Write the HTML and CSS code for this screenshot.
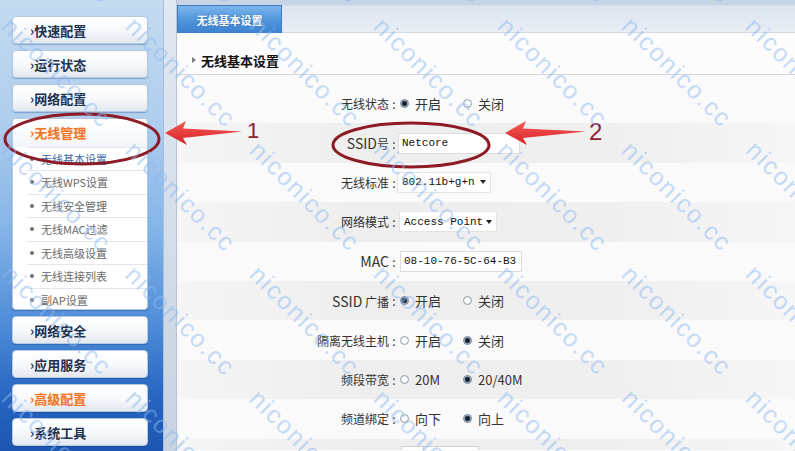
FILE: index.html
```html
<!DOCTYPE html>
<html lang="zh-CN">
<head>
<meta charset="utf-8">
<title>无线基本设置</title>
<link rel="stylesheet" href="styles.css">
</head>
<body>
<div class="app">
  <aside class="sidebar">
    <nav class="menu">
      <div class="btn">›快速配置</div>
      <div class="btn">›运行状态</div>
      <div class="btn">›网络配置</div>
      <div class="group">
        <div class="btn head orange">›无线管理</div>
        <ul class="sub">
          <li class="active">无线基本设置</li>
          <li>无线WPS设置</li>
          <li>无线安全管理</li>
          <li>无线MAC过滤</li>
          <li>无线高级设置</li>
          <li>无线连接列表</li>
          <li>副AP设置</li>
        </ul>
      </div>
      <div class="btn">›网络安全</div>
      <div class="btn">›应用服务</div>
      <div class="btn orange">›高级配置</div>
      <div class="btn">›系统工具</div>
    </nav>
  </aside>
  <div class="divider"></div>
  <main class="main">
    <div class="topbar"><div class="tab">无线基本设置</div></div>
    <div class="content">
      <h2 class="section-title">无线基本设置</h2>
      <div class="form">
        <div class="row">
          <div class="label">无线状态</div><div class="colon">:</div>
          <div class="opts"><span class="opt"><i class="radio on"></i>开启</span><span class="opt"><i class="radio"></i>关闭</span></div>
        </div>
        <div class="row">
          <div class="label"><span class="lat">SSID</span>号</div><div class="colon">:</div>
          <div><div class="field ssid">Netcore</div></div>
        </div>
        <div class="row">
          <div class="label">无线标准</div><div class="colon">:</div>
          <div><div class="field select std">802.11b+g+n<i class="caret"></i></div></div>
        </div>
        <div class="row">
          <div class="label">网络模式</div><div class="colon">:</div>
          <div><div class="field select mode">Access Point<i class="caret"></i></div></div>
        </div>
        <div class="row">
          <div class="label"><span class="lat">MAC</span></div><div class="colon">:</div>
          <div><div class="field mac">08-10-76-5C-64-B3</div></div>
        </div>
        <div class="row">
          <div class="label"><span class="lat">SSID</span> 广播</div><div class="colon">:</div>
          <div class="opts"><span class="opt"><i class="radio on"></i>开启</span><span class="opt"><i class="radio"></i>关闭</span></div>
        </div>
        <div class="row">
          <div class="label">隔离无线主机</div><div class="colon">:</div>
          <div class="opts"><span class="opt"><i class="radio"></i>开启</span><span class="opt"><i class="radio on"></i>关闭</span></div>
        </div>
        <div class="row">
          <div class="label">频段带宽</div><div class="colon">:</div>
          <div class="opts"><span class="opt"><i class="radio"></i>20M</span><span class="opt"><i class="radio on"></i>20/40M</span></div>
        </div>
        <div class="row">
          <div class="label">频道绑定</div><div class="colon">:</div>
          <div class="opts"><span class="opt"><i class="radio"></i>向下</span><span class="opt"><i class="radio on"></i>向上</span></div>
        </div>
        <div class="row tail">
          <div class="label"></div><div class="colon"></div>
          <div><div class="field chan"><span class="seg"></span></div></div>
        </div>
      </div>
    </div>
  </main>
</div>

<svg class="annot" width="795" height="451" viewBox="0 0 795 451" aria-hidden="true">
  <defs>
    <linearGradient id="ar" x1="0" y1="0" x2="0" y2="1">
      <stop offset="0" stop-color="#f25a55"/>
      <stop offset="1" stop-color="#d9232a"/>
    </linearGradient>
  </defs>
  <ellipse cx="82" cy="139" rx="77" ry="25" fill="none" stroke="#8c1b25" stroke-width="3"/>
  <ellipse cx="411" cy="145" rx="78" ry="22" fill="none" stroke="#8c1b25" stroke-width="3"/>
  <polygon points="165,133 186,121 183,128.5 242,131.5 183,138 187,145" fill="url(#ar)"/>
  <polygon points="505,133 526,121 523,128.5 586,131.5 523,138 527,145" fill="url(#ar)"/>
  <text x="247" y="138" class="num">1</text>
  <text x="589" y="140" class="num big">2</text>
</svg>

<div class="wm-clip" aria-hidden="true">
<div class="wm">
  <div class="wm-row"><span>niconico.cc</span><span>niconico.cc</span><span>niconico.cc</span><span>niconico.cc</span><span>niconico.cc</span><span>niconico.cc</span><span>niconico.cc</span></div>
  <div class="wm-row"><span>niconico.cc</span><span>niconico.cc</span><span>niconico.cc</span><span>niconico.cc</span><span>niconico.cc</span><span>niconico.cc</span><span>niconico.cc</span></div>
  <div class="wm-row"><span>niconico.cc</span><span>niconico.cc</span><span>niconico.cc</span><span>niconico.cc</span><span>niconico.cc</span><span>niconico.cc</span><span>niconico.cc</span></div>
  <div class="wm-row"><span>niconico.cc</span><span>niconico.cc</span><span>niconico.cc</span><span>niconico.cc</span><span>niconico.cc</span><span>niconico.cc</span><span>niconico.cc</span></div>
  <div class="wm-row"><span>niconico.cc</span><span>niconico.cc</span><span>niconico.cc</span><span>niconico.cc</span><span>niconico.cc</span><span>niconico.cc</span><span>niconico.cc</span></div>
  <div class="wm-row"><span>niconico.cc</span><span>niconico.cc</span><span>niconico.cc</span><span>niconico.cc</span><span>niconico.cc</span><span>niconico.cc</span><span>niconico.cc</span></div>
  <div class="wm-row"><span>niconico.cc</span><span>niconico.cc</span><span>niconico.cc</span><span>niconico.cc</span><span>niconico.cc</span><span>niconico.cc</span><span>niconico.cc</span></div>
  <div class="wm-row"><span>niconico.cc</span><span>niconico.cc</span><span>niconico.cc</span><span>niconico.cc</span><span>niconico.cc</span><span>niconico.cc</span><span>niconico.cc</span></div>
  <div class="wm-row"><span>niconico.cc</span><span>niconico.cc</span><span>niconico.cc</span><span>niconico.cc</span><span>niconico.cc</span><span>niconico.cc</span><span>niconico.cc</span></div>
  <div class="wm-row"><span>niconico.cc</span><span>niconico.cc</span><span>niconico.cc</span><span>niconico.cc</span><span>niconico.cc</span><span>niconico.cc</span><span>niconico.cc</span></div>
  <div class="wm-row"><span>niconico.cc</span><span>niconico.cc</span><span>niconico.cc</span><span>niconico.cc</span><span>niconico.cc</span><span>niconico.cc</span><span>niconico.cc</span></div>
  <div class="wm-row"><span>niconico.cc</span><span>niconico.cc</span><span>niconico.cc</span><span>niconico.cc</span><span>niconico.cc</span><span>niconico.cc</span><span>niconico.cc</span></div>
</div>
</div>
</body>
</html>
```

FILE: styles.css
```css
* { box-sizing: border-box; }
html, body { margin: 0; width: 795px; height: 451px; overflow: hidden; }
body {
  position: relative;
  font-family: "Noto Sans CJK SC", "Noto Sans", sans-serif;
  background: #fafafa;
  color: #333;
}

.app { display: flex; height: 451px; overflow: hidden; }

/* ---------- sidebar ---------- */
.sidebar {
  width: 163px;
  flex: none;
  padding: 16px 0 0 12px;
  background: linear-gradient(to bottom, #c4dbf0 0%, #b0ceee 26%, #86b5e8 50%, #4f8cd8 72%, #2765c1 88%, #1c56b0 100%);
}
.menu { width: 136px; display: flex; flex-direction: column; gap: 6px; }
.btn {
  height: 28px;
  display: flex;
  align-items: center;
  padding-left: 17px;
  border: 1px solid #b6c9df;
  border-radius: 4px;
  background: linear-gradient(#ffffff 0%, #f6f8fb 55%, #e2e8f0 100%);
  box-shadow: 0 1px 1px rgba(10, 50, 110, .3);
  font-size: 13px;
  font-weight: 700;
  color: #1d3150;
  white-space: nowrap;
}
.orange { color: #f0742a; text-shadow: 0 0 2px #ffe2c4; }
.group {
  height: 192px;
  border: 1px solid #b6c9df;
  border-radius: 4px;
  background: #fff;
  display: flex;
  flex-direction: column;
  overflow: hidden;
  box-shadow: 0 1px 1px rgba(10, 50, 110, .3);
}
.group .head {
  height: 27.5px;
  flex: none;
  border: none;
  border-radius: 0;
  box-shadow: none;
  background: linear-gradient(#ffffff, #f2f5f9);
}
.sub { list-style: none; margin: 0; padding: 0; }
.sub li {
  height: 23.5px;
  display: flex;
  align-items: center;
  margin-left: 14px;
  padding-left: 3px;
  border-top: 1px solid #e3e6ea;
  font-size: 11px;
  color: #6a6a6a;
  white-space: nowrap;
}
.sub li::before {
  content: "";
  width: 4px;
  height: 4px;
  border-radius: 50%;
  background: #6f6f6f;
  margin-right: 7px;
  flex: none;
}
.sub li.active { color: #3a68a6; }

.divider {
  width: 14px;
  flex: none;
  background: linear-gradient(#e1e8f1, #c8d3e2);
  border-left: 1px solid #a7bfdc;
  border-right: 1px solid #b7c3d3;
}

/* ---------- main ---------- */
.main { flex: 1; display: flex; flex-direction: column; background: #fafafa; overflow: hidden; }
.topbar {
  height: 33px;
  flex: none;
  padding-top: 5px;
  display: flex;
  background: linear-gradient(to bottom, #c6d4e6 0, #c6d4e6 5px, #dbe4f0 6px, #e9eef5 100%);
  border-bottom: 1px solid #d2d9e2;
}
.tab {
  width: 105px;
  height: 28px;
  display: flex;
  align-items: center;
  justify-content: center;
  background: linear-gradient(#7cb6ec 0%, #5096dc 50%, #3d82d1 100%);
  border: 1px solid #3f7cc0;
  border-bottom: none;
  color: #fff;
  font-size: 11px;
  font-weight: 700;
  text-shadow: 0 0 2px rgba(40, 80, 140, .6);
}
.content { flex: 1; background: #fafafa; }
.section-title {
  margin: 0;
  height: 42px;
  display: flex;
  align-items: flex-end;
  padding: 0 0 4px 15px;
  border-bottom: 1px solid #d6d6d6;
  font-size: 13px;
  font-weight: 700;
  color: #111;
  background: #fcfcfc;
}
.section-title::before {
  content: "";
  width: 0;
  height: 0;
  border-left: 4px solid #7a7a7a;
  border-top: 3px solid transparent;
  border-bottom: 3px solid transparent;
  margin: 0 5px 7px 0;
}
.form { margin-top: 9px; }
.row {
  height: 39.4px;
  display: grid;
  grid-template-columns: 212px 10px 1fr;
  align-items: center;
  background: #fafafa;
}
.row:nth-child(even) {
  background: linear-gradient(to right, #f5f5f5 0%, #eeeeef 30%, #efeff0 70%, #f6f6f6 100%);
}
.row.tail { height: 11.4px; align-items: end; }
.label { text-align: right; font-size: 12px; color: #333; white-space: nowrap; }
.lat { font-size: 14px; }
.colon { text-align: center; font-size: 12px; color: #333; }
.opts { display: flex; align-items: center; padding-left: 1px; }
.opt { display: flex; align-items: center; gap: 6px; width: 63px; font-size: 13px; color: #333; white-space: nowrap; }
.radio {
  width: 9px;
  height: 9px;
  flex: none;
  border-radius: 50%;
  border: 1px solid #979ea6;
  background: radial-gradient(circle, #ffffff 0, #ffffff 2px, #dfe3e8 100%);
}
.radio.on {
  border-color: #6f7f90;
  background: radial-gradient(circle, #12202e 0, #12202e 1.8px, #4b6279 2.6px, #cbd8e4 3.4px, #eef2f6 100%);
}
.field {
  height: 21px;
  display: flex;
  align-items: center;
  padding-left: 3px;
  background: #fff;
  border: 1px solid #dcdcdc;
  font-family: "Liberation Mono", monospace;
  font-size: 11px;
  color: #111;
  white-space: nowrap;
}
.ssid { width: 122px; margin-left: -1px; }
.mac { width: 122px; margin-left: 1px; }
.select { justify-content: space-between; padding-right: 4px; border-color: #e4e4e4; }
.std { width: 94px; margin-left: -2px; padding-left: 4px; }
.mode { width: 98px; margin-left: 0; padding-left: 4px; }
.caret {
  width: 0;
  height: 0;
  border-left: 3px solid transparent;
  border-right: 3px solid transparent;
  border-top: 4px solid #222;
}
.chan { width: 78px; height: 4px; margin-left: 2px; padding-left: 0; border-bottom: none; border-color: #cfcfcf; }
.seg { width: 22px; height: 100%; border-right: 1px solid #cfcfcf; }

/* ---------- overlays ---------- */
.annot { position: absolute; left: 0; top: 0; pointer-events: none; }
.num { font-family: "Liberation Sans", sans-serif; font-size: 22px; fill: #8e2030; }
.num.big { font-size: 24px; }

.wm-clip {
  position: absolute;
  inset: 0;
  overflow: hidden;
  pointer-events: none;
}
.wm {
  position: absolute;
  left: 15px;
  top: 13px;
  width: max-content;
  transform-origin: 0 0;
  transform: rotate(45deg) translate(-175.4px, -613.9px);
}
.wm-row { display: flex; height: 87.7px; }
.wm-row:nth-child(odd) { margin-left: 87.7px; }
.wm-row span {
  flex: none;
  width: 175.4px;
  font-family: "Liberation Sans", sans-serif;
  font-size: 25px;
  line-height: 1;
  letter-spacing: 1.8px;
  color: rgba(140, 184, 240, .5);
}
```
